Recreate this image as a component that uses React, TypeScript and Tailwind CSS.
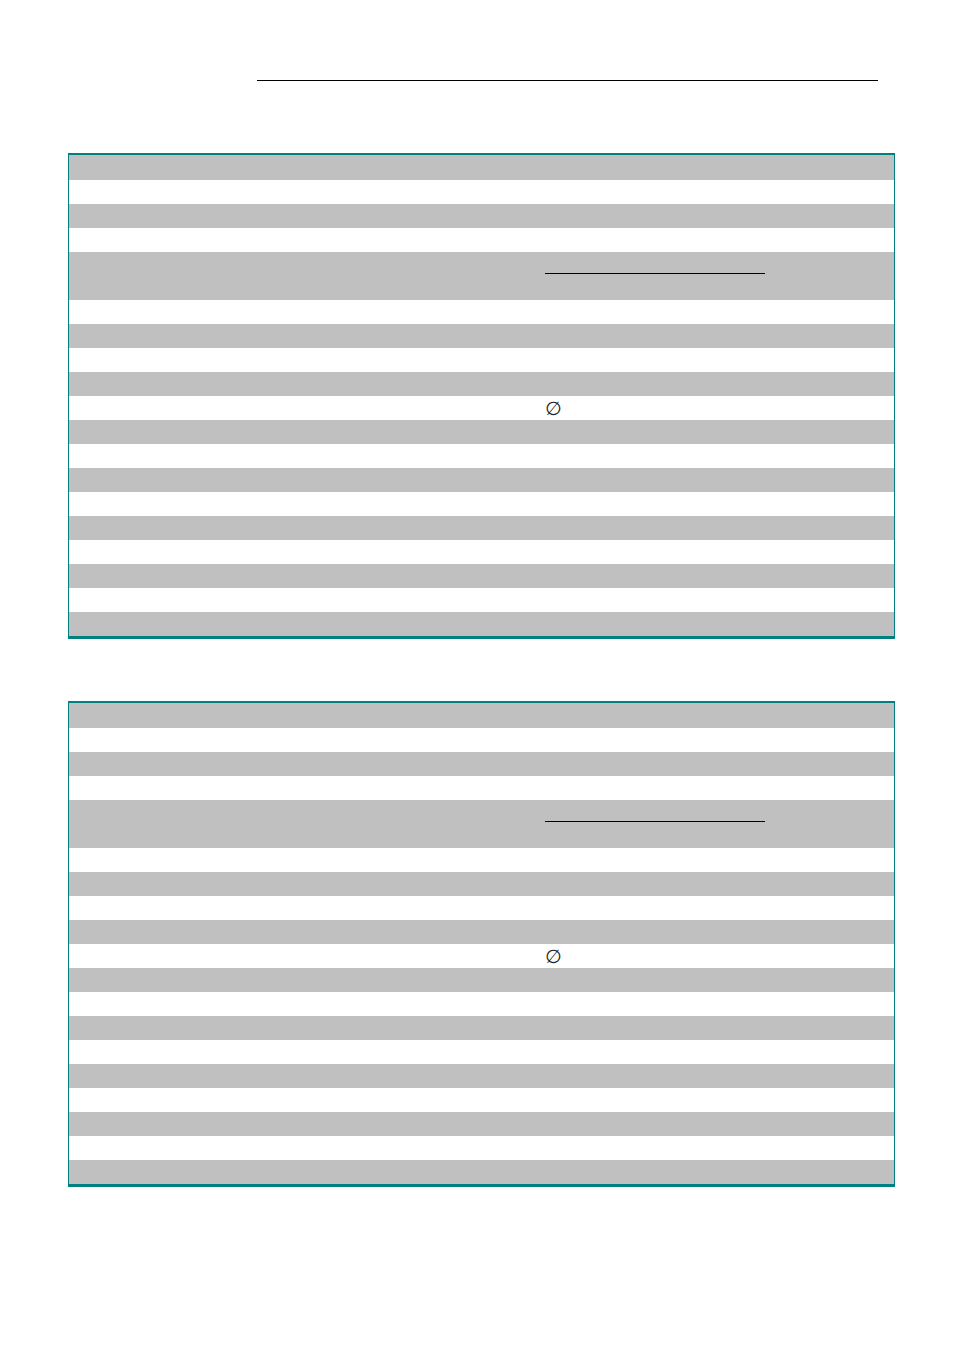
const rows = [
  "g", "w", "g", "w", "big", "w", "g", "w", "g", "empty", "g", "w", "g", "w", "g", "w", "g", "w", "g",
];

function Row({ kind, first }: { kind: string; first: boolean }) {
  if (kind === "big") {
    return (
      <div className="h-[48px] bg-[#c0c0c0] pl-[476px] pt-[21px]">
        <div className="w-[220px] border-t border-black" />
      </div>
    );
  }
  if (kind === "empty") {
    return (
      <div className="h-[24px] bg-white pl-[476px] pt-[1px] flex items-center">
        <span className="text-[19px] leading-none text-[#222] font-['DejaVu_Sans',sans-serif]">∅</span>
      </div>
    );
  }
  return (
    <div
      className={
        (first ? "h-[25px] " : "h-[24px] ") + (kind === "g" ? "bg-[#c0c0c0]" : "bg-white")
      }
    />
  );
}

function Table() {
  return (
    <div className="ml-[68px] w-[827px] border-t-2 border-x border-b-[3px] border-[#008080]">
      {rows.map((r, i) => (
        <Row key={i} kind={r} first={i === 0} />
      ))}
    </div>
  );
}

export default function App() {
  return (
    <div className="w-[954px] h-[1350px] bg-white pt-[80px]">
      <div className="ml-[257px] w-[621px] border-t border-black" />
      <div className="mt-[72px]">
        <Table />
      </div>
      <div className="mt-[62px]">
        <Table />
      </div>
    </div>
  );
}
